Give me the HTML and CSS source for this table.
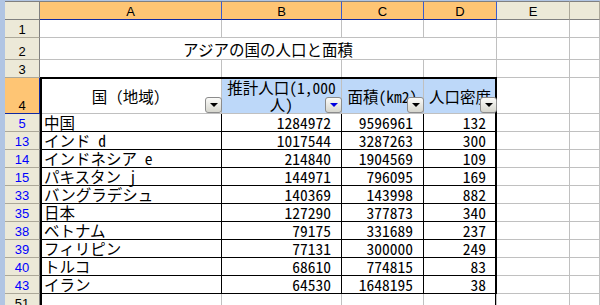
FILE: index.html
```html
<!DOCTYPE html>
<html lang="ja">
<head>
<meta charset="utf-8">
<title>アジアの国の人口と面積</title>
<link rel="stylesheet" href="styles.css">
</head>
<body>
<div class="sheet">
  <div class="corner"></div>
  <div class="ch sel">A</div><div class="ch sel">B</div><div class="ch sel">C</div><div class="ch sel">D</div><div class="ch">E</div><div class="ch"></div>

  <div class="rh">1</div><div class="c"></div><div class="c"></div><div class="c"></div><div class="c"></div><div class="c"></div><div class="c"></div>

  <div class="rh">2</div><div class="c title">アジアの国の人口と面積</div><div class="c"></div><div class="c"></div>

  <div class="rh">3</div><div class="c"></div><div class="c"></div><div class="c"></div><div class="c"></div><div class="c"></div><div class="c"></div>

  <div class="rh sel">4</div>
  <div class="c hd fw">国（地域）<span class="dd"></span></div>
  <div class="c hd hl hw">推計人口(1,000<br>人)<span class="dd on"></span></div>
  <div class="c hd hl">面積(km2)<span class="dd"></span></div>
  <div class="c hd hl">人口密度<span class="dd"></span></div>
  <div class="c"></div><div class="c"></div>
  <div class="selbox"><span class="handle"></span></div>

  <div class="rh f">5</div><div class="c t ta">中国</div><div class="c t n">1284972</div><div class="c t n">9596961</div><div class="c t n">132</div><div class="c"></div><div class="c"></div>
  <div class="rh f">13</div><div class="c t ta">インド d</div><div class="c t n">1017544</div><div class="c t n">3287263</div><div class="c t n">300</div><div class="c"></div><div class="c"></div>
  <div class="rh f">14</div><div class="c t ta">インドネシア e</div><div class="c t n">214840</div><div class="c t n">1904569</div><div class="c t n">109</div><div class="c"></div><div class="c"></div>
  <div class="rh f">15</div><div class="c t ta">パキスタン j</div><div class="c t n">144971</div><div class="c t n">796095</div><div class="c t n">169</div><div class="c"></div><div class="c"></div>
  <div class="rh f">33</div><div class="c t ta">バングラデシュ</div><div class="c t n">140369</div><div class="c t n">143998</div><div class="c t n">882</div><div class="c"></div><div class="c"></div>
  <div class="rh f">35</div><div class="c t ta">日本</div><div class="c t n">127290</div><div class="c t n">377873</div><div class="c t n">340</div><div class="c"></div><div class="c"></div>
  <div class="rh f">38</div><div class="c t ta">ベトナム</div><div class="c t n">79175</div><div class="c t n">331689</div><div class="c t n">237</div><div class="c"></div><div class="c"></div>
  <div class="rh f">39</div><div class="c t ta">フィリピン</div><div class="c t n">77131</div><div class="c t n">300000</div><div class="c t n">249</div><div class="c"></div><div class="c"></div>
  <div class="rh f">40</div><div class="c t ta">トルコ</div><div class="c t n">68610</div><div class="c t n">774815</div><div class="c t n">83</div><div class="c"></div><div class="c"></div>
  <div class="rh f">43</div><div class="c t ta">イラン</div><div class="c t n">64530</div><div class="c t n">1648195</div><div class="c t n">38</div><div class="c"></div><div class="c"></div>

  <div class="rh">51</div><div class="c"></div><div class="c"></div><div class="c"></div><div class="c"></div><div class="c"></div><div class="c"></div>
</div>
</body>
</html>
```

FILE: styles.css
```css
* { box-sizing: border-box; }
html, body { margin: 0; height: 305px; overflow: hidden; }
body {
  background: #b1c5e3;
  font-family: "Noto Sans CJK JP", sans-serif;
  font-size: 15.5px;
  font-feature-settings: "hwid" 1;
  color: #000;
}
.sheet {
  position: relative;
  margin: 1px 0 0 5px;
  display: grid;
  grid-template-columns: 35px 182px 120px 82px 73px 73px 1fr;
  grid-template-rows: 19px 18px 22px 18px 36px repeat(11, 18px);
  background: #fff;
}
.corner, .ch {
  background: #ece9d8;
  border-top: 1px solid #808080;
  border-right: 1px solid #aca899;
  border-bottom: 1px solid #808080;
  font: 13px/14px "Liberation Sans", Arial, sans-serif;
  display: flex;
  align-items: flex-end;
  justify-content: center;
}
.corner { border-right-color: #808080; }
.ch.sel {
  background: #fec574;
  border-right-color: #3b5ccf;
  border-bottom-color: #1028a0;
}
.rh {
  background: #ece9d8;
  border-right: 1px solid #808080;
  border-bottom: 1px solid #aca899;
  font: 13px/14px "Liberation Sans", Arial, sans-serif;
  display: flex;
  align-items: flex-end;
  justify-content: center;
}
.rh.f { color: #0000ff; }
.rh.sel {
  background: #fec574;
  border-right-color: #1028a0;
  border-bottom-color: #1028a0;
}
.c {
  position: relative;
  border-right: 1px solid #c0c0c0;
  border-bottom: 1px solid #c0c0c0;
  line-height: 17px;
  white-space: nowrap;
  display: flex;
  align-items: flex-end;
}
.title {
  grid-column: span 4;
  justify-content: center;
  padding-bottom: 1px;
}
.hd {
  align-items: center;
  justify-content: center;
  text-align: center;
  white-space: normal;
  padding-top: 1px;
}
.fw { font-feature-settings: normal; }
.hl { background: #bdd8f9; }
.hw { padding-top: 0; }
.t { border-right-color: #000; border-bottom-color: #000; }
.ta { border-left: 1px solid #000; padding-left: 3px; }
.n { justify-content: flex-end; padding-right: 10px; }
.dd {
  position: absolute;
  right: -1px;
  bottom: 0;
  width: 17px;
  height: 16px;
  border: 1px solid #8c8c8c;
  border-radius: 3px;
  background: linear-gradient(#fbfbf9, #d6d6ce);
  z-index: 2;
}
.dd::after {
  content: "";
  position: absolute;
  left: 4px;
  top: 5px;
  border-left: 4px solid transparent;
  border-right: 4px solid transparent;
  border-top: 4px solid #000;
}
.dd.on::after { border-top-color: #0000e0; }
.selbox {
  position: absolute;
  grid-column: 2 / 6;
  grid-row: 5;
  top: -1px;
  left: 0;
  right: 0;
  bottom: 0;
  border: 2px solid #000;
  pointer-events: none;
}
.handle {
  position: absolute;
  right: -5px;
  bottom: -3px;
  width: 5px;
  height: 5px;
  background: #000;
  z-index: 3;
}
```
